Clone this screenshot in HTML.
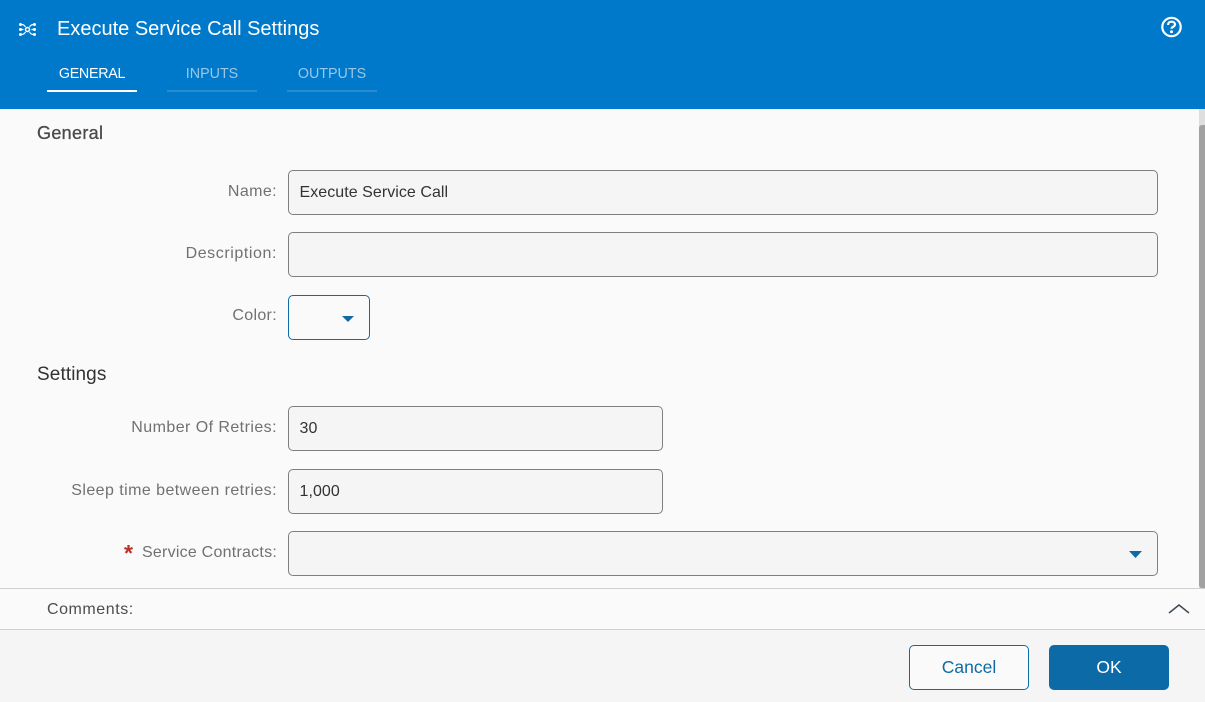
<!DOCTYPE html>
<html><head><meta charset="utf-8"><style>
html,body{margin:0;padding:0}
body{width:1205px;height:702px;position:relative;overflow:hidden;background:#fafafa;font-family:"Liberation Sans",sans-serif}
.a{position:absolute;white-space:nowrap}
.lab{right:928px;font-size:16px;color:#717171;line-height:20px;text-align:right}
.in{position:absolute;box-sizing:border-box;background:#f5f5f5;border:1px solid #7f7f7f;border-radius:5px;height:45px;font-size:16px;color:#333;line-height:44px;padding-left:10.500px;letter-spacing:.05px}
.tab{position:absolute;top:90px;height:2px;width:91px;background:#2a8bd0}
.tt{position:absolute;top:65px;font-size:14.3px;line-height:18px;color:#99c7e8;text-align:center;width:90px}
</style></head><body>
<div class="a" style="left:0;top:0;width:1205px;height:109px;background:#0079cb"></div>
<svg class="a" style="left:18px;top:22px" width="19" height="15" viewBox="0 0 19 15" fill="#fff" stroke="#fff">
<circle cx="9.500" cy="7.500" r="2" fill="none" stroke-width="1.500"/>
<circle cx="2.500" cy="2.500" r="1.500" stroke="none"/><circle cx="2.500" cy="7.500" r="1.500" stroke="none"/><circle cx="2.500" cy="12.500" r="1.500" stroke="none"/>
<circle cx="16.500" cy="2.500" r="1.500" stroke="none"/><circle cx="16.500" cy="7.500" r="1.500" stroke="none"/><circle cx="16.500" cy="12.500" r="1.500" stroke="none"/>
<path d="M3 2.500C6 2.500 6.500 3.500 7.500 5M16 2.500C13 2.500 12.500 3.500 11.500 5M3 12.500C6 12.500 6.500 11.500 7.500 10M16 12.500C13 12.500 12.500 11.500 11.500 10M3 7.500h2.500M16 7.500h-2.500" fill="none" stroke-width="1.200"/>
</svg>
<div class="a" style="left:57px;top:16px;font-size:20px;line-height:26px;color:#fff">Execute Service Call Settings</div>
<div class="tt" style="left:47px;color:#fff;letter-spacing:-.3px">GENERAL</div>
<div class="tt" style="left:167px">INPUTS</div>
<div class="tt" style="left:287px">OUTPUTS</div>
<div class="tab" style="left:47px;width:90px;background:#fff"></div>
<div class="tab" style="left:167px;width:90px"></div>
<div class="tab" style="left:287px;width:90px"></div>
<svg class="a" style="left:1160px;top:16px" width="23" height="23" viewBox="0 0 23 23">
<circle cx="11.500" cy="11" r="9.200" fill="none" stroke="#fff" stroke-width="2.200"/>
<path d="M8 9c0-2.200 1.500-3.300 3.500-3.300S15 6.800 15 8.500c0 2.500-3.500 2.200-3.500 4.300" fill="none" stroke="#fff" stroke-width="2.200"/>
<circle cx="11.500" cy="15.800" r="1.500" fill="#fff"/>
</svg>

<div class="a" style="left:1199px;top:109px;width:6px;height:479px;background:#dedede"></div>
<div class="a" style="left:1199px;top:125px;width:6px;height:463px;background:#a1a1a1;border-radius:3px 0 0 3px"></div>

<div class="a" style="left:37px;top:122px;font-size:18px;line-height:22px;color:#4a4a4a;letter-spacing:.33px;-webkit-text-stroke:.3px #4a4a4a">General</div>
<div class="a lab" style="top:182px;letter-spacing:.4px">Name:</div>
<div class="in" style="left:288px;top:170px;width:870px">Execute Service Call</div>
<div class="a lab" style="top:244px;letter-spacing:.58px">Description:</div>
<div class="in" style="left:288px;top:232px;width:870px"></div>
<div class="a lab" style="top:306px;letter-spacing:.33px">Color:</div>
<div class="in" style="left:288px;top:295px;width:82px;background:#fafafa;border-color:#0f6ba6"></div>
<svg class="a" style="left:342px;top:316px" width="12" height="6"><path d="M0 0h12L6 6z" fill="#0f6ba6"/></svg>

<div class="a" style="left:37px;top:363px;font-size:19px;line-height:24px;color:#333;letter-spacing:.1px">Settings</div>
<div class="a lab" style="top:418px;letter-spacing:.44px">Number Of Retries:</div>
<div class="in" style="left:288px;top:406px;width:375px">30</div>
<div class="a lab" style="top:481px;letter-spacing:.44px">Sleep time between retries:</div>
<div class="in" style="left:288px;top:469px;width:375px">1,000</div>
<div class="a lab" style="top:543px;letter-spacing:.24px">Service Contracts:</div>
<div class="a" style="left:124px;top:541px;font-size:23px;line-height:24px;color:#b8322a;font-weight:bold">*</div>
<div class="in" style="left:288px;top:531px;width:870px"></div>
<svg class="a" style="left:1129px;top:551px" width="13" height="7"><path d="M0 0h13L6.500 7z" fill="#0f6ba6"/></svg>

<div class="a" style="left:0;top:588px;width:1205px;height:40px;border-top:1px solid #cfcfcf;border-bottom:1px solid #cfcfcf;background:#fafafa"></div>
<div class="a" style="left:47px;top:600px;font-size:16px;line-height:20px;color:#4d4d4d;letter-spacing:.55px">Comments:</div>
<svg class="a" style="left:1168px;top:602px" width="22" height="12"><path d="M1 11l10-8 10 8" fill="none" stroke="#3f4a55" stroke-width="1.500"/></svg>
<div class="a" style="left:0;top:630px;width:1205px;height:72px;background:#f5f5f5"></div>
<div class="a" style="left:909px;top:645px;box-sizing:border-box;width:120px;height:45px;border:1px solid #0f6ba6;border-radius:5px;background:#fafafa;color:#0f6ba6;font-size:17.500px;line-height:43px;text-align:center">Cancel</div>
<div class="a" style="left:1049px;top:645px;width:120px;height:45px;border-radius:5px;background:#0c6ba6;color:#fff;font-size:17.500px;line-height:45px;text-align:center">OK</div>
</body></html>
